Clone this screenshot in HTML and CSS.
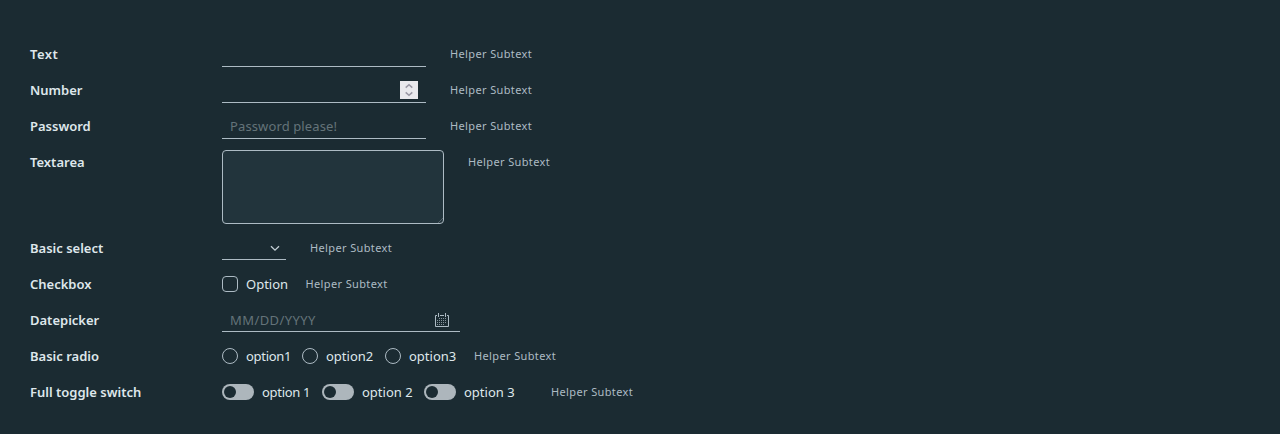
FILE: index.html
```html
<!DOCTYPE html>
<html lang="en">
<head>
<meta charset="utf-8">
<title>Form controls</title>
<link rel="stylesheet" href="styles.css">
</head>
<body>
<form class="form">
  <div class="row"><label class="label first">Text</label><div class="field"></div><span class="helper">Helper Subtext</span></div>
  <div class="row"><label class="label">Number</label><div class="field number"><span class="spinner"><svg width="18" height="18" viewBox="0 0 18 18"><path d="M5.7 6.6 9 3.7l3.3 2.9M5.7 11.4 9 14.3l3.3-2.9"/></svg></span></div><span class="helper">Helper Subtext</span></div>
  <div class="row"><label class="label">Password</label><div class="field"><span class="placeholder password">Password please!</span></div><span class="helper">Helper Subtext</span></div>
  <div class="row tall"><label class="label">Textarea</label><div class="textarea"><svg width="6" height="6" viewBox="0 0 6 6"><path d="M1 6 6 1M4 6l2-2"/></svg></div><span class="helper">Helper Subtext</span></div>
  <div class="row upper"><label class="label">Basic select</label><div class="field select"><svg width="10" height="7" viewBox="0 0 10 7"><path d="M1 1.2 5 5.2 9 1.2"/></svg></div><span class="helper">Helper Subtext</span></div>
  <div class="row"><label class="label">Checkbox</label><div class="choice single"><span class="box"></span><span class="text">Option</span></div><span class="helper flush">Helper Subtext</span></div>
  <div class="row upper"><label class="label">Datepicker</label><div class="field date"><span class="placeholder datehint">MM/DD/YYYY</span><svg width="16" height="16" viewBox="0 0 16 16"><path class="frame" d="M3 3.5H1.5v11h13v-11H13M6 3.5h4M4.5 1v4M11.5 1v4"/><path class="days" d="M5 6.5h8M3 8.5h10M3 10.5h10M3 12.5h7"/></svg></div></div>
  <div class="row"><label class="label">Basic radio</label><div class="choice radio1"><span class="circle"></span><span class="text tight">option1</span></div><div class="choice radio2"><span class="circle"></span><span class="text">option2</span></div><div class="choice radio3"><span class="circle"></span><span class="text">option3</span></div><span class="helper flush">Helper Subtext</span></div>
  <div class="row"><label class="label">Full toggle switch</label><div class="choice toggle1"><span class="switch"></span><span class="text tight">option 1</span></div><div class="choice toggle2"><span class="switch"></span><span class="text">option 2</span></div><div class="choice toggle3"><span class="switch"></span><span class="text">option 3</span></div><span class="helper flush">Helper Subtext</span></div>
</form>
</body>
</html>
```
FILE: styles.css
```css
* { box-sizing: border-box; }
body { margin: 0; background: #1b2b32; color: #dfe7eb; font: 13px/16px "Noto Sans", sans-serif; }
.form { padding: 36px 30px; }
.row { display: flex; align-items: center; height: 36px; white-space: nowrap; }
.label { flex: none; width: 192px; font-weight: 600; }
.first { letter-spacing: 0.5px; }
.field { display: flex; align-items: center; flex: none; width: 204px; height: 24px; margin-top: 2px; padding: 0 8px 2px; border-bottom: 1px solid #adbbc4; }
.upper .field { margin-top: 0; padding-bottom: 0; }
.number { justify-content: flex-end; }
.spinner { width: 18px; height: 18px; background: #e9e9ed; }
svg { display: block; flex: none; fill: none; }
.spinner path { stroke: #9997a4; stroke-width: 1.5; }
.placeholder { color: #647379; }
.password { letter-spacing: 0.12px; }
.datehint { letter-spacing: 0.42px; }
.helper { margin-left: 24px; color: #adbbc4; font-size: 11px; letter-spacing: 0.37px; }
.helper.flush { margin-left: 0; }
.tall { height: 86px; align-items: flex-start; padding-top: 6px; }
.tall .label, .tall .helper { margin-top: 4px; }
.textarea { display: flex; align-items: flex-end; justify-content: flex-end; width: 222px; height: 74px; background: #22343c; border: 1px solid #adbbc4; border-radius: 4px; }
.textarea path { stroke: #65737a; stroke-width: .7; }
.select { width: 64px; justify-content: flex-end; padding-right: 6px; }
.select path { stroke: #c5d0d6; stroke-width: 1.3; }
.select svg { margin-top: 2px; }
.date { width: 238px; justify-content: space-between; padding-right: 10px; }
.frame { stroke: #adbbc4; stroke-width: 1; }
.days { stroke: #84939b; stroke-width: 1; stroke-dasharray: 1 1; }
.choice { display: flex; align-items: center; flex: none; gap: 8px; }
.tight { letter-spacing: -0.3px; }
.box, .circle { width: 16px; height: 16px; border: 1px solid #adbbc4; border-radius: 4px; }
.circle { border-radius: 50%; }
.single { width: 83.5px; }
.radio1 { width: 80px; }
.radio2 { width: 83px; }
.radio3 { width: 89px; }
.switch { display: flex; align-items: center; width: 32px; height: 16px; padding-left: 2px; background: #adb6bc; border-radius: 8px; }
.switch::before { content: ""; width: 12px; height: 12px; background: #1b2b32; border-radius: 50%; }
.toggle1 { width: 100px; }
.toggle2 { width: 102px; }
.toggle3 { width: 127px; }
```
